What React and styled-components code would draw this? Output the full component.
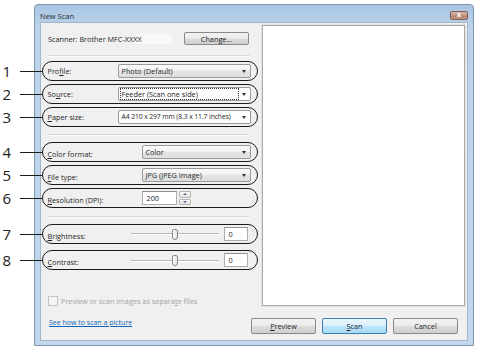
import React from 'react';
import styled, { createGlobalStyle } from 'styled-components';

const GlobalStyle = createGlobalStyle`
  body {
    margin: 0;
    background: #fff;
    font-family: "Open Sans", "Noto Sans", sans-serif;
    color: #1e1e1e;
  }
`;

const Page = styled.div`
  width: 500px;
  height: 350px;
  box-sizing: border-box;
  padding: 4px 0 0 34px;
  overflow: hidden;
`;

const Window = styled.div`
  width: 440px;
  height: 342px;
  box-sizing: border-box;
  border: 1px solid #7f95ab;
  border-radius: 4px 4px 0 0;
  background: linear-gradient(#a9c6e4, #bcd3ea 24px, #c2d7ed);
  padding: 0 5px 4px 5px;
  display: flex;
  flex-direction: column;
`;

const TitleBar = styled.div`
  height: 17px;
  flex: none;
  box-sizing: border-box;
  padding-top: 4px;
  display: flex;
  align-items: center;
  justify-content: space-between;
  font-size: 7.5px;
  color: #2a2a2a;
`;

const CloseButton = styled.div`
  width: 18px;
  height: 9px;
  box-sizing: border-box;
  border: 1px solid #7a5f52;
  border-radius: 2px;
  background: linear-gradient(#dcbcad, #c39581 50%, #b27c66 51%, #c49a86);
  color: #fff;
  font-size: 7px;
  font-weight: bold;
  line-height: 7px;
  text-align: center;
  font-family: "DejaVu Sans", sans-serif;
`;

const Client = styled.div`
  flex: 1;
  box-sizing: border-box;
  background: #f0f0f0;
  border: 1px solid #a3b6cb;
  padding: 2px 1px 5px 1px;
  display: flex;
  flex-direction: column;
  font-size: 7.3px;
`;

const TopArea = styled.div`
  display: flex;
  gap: 3px;
  height: 281px;
`;

const LeftColumn = styled.div`
  width: 216px;
  flex: none;
  padding-top: 7px;
  display: flex;
  flex-direction: column;
`;

const ScannerRow = styled.div`
  height: 13px;
  display: flex;
  align-items: center;
  justify-content: space-between;
  padding: 0 9px 0 6px;
`;

const ScannerName = styled.span`
  padding-right: 30px;
  background: linear-gradient(90deg, #f0f0f0 70%, #f8f8f8 71%);
`;

const Separator = styled.div`
  height: 1px;
  margin: ${p => p.$top}px 8px 0 6px;
  background: #d8d8d8;
  border-bottom: 1px solid #fbfbfb;
`;

const Oval = styled.div`
  position: relative;
  height: 20px;
  box-sizing: border-box;
  margin-top: ${p => p.$gap}px;
  border: 1.5px solid #1a1a1a;
  border-radius: 10px;
  display: flex;
  align-items: center;
  padding: 0 6.5px 0 4.5px;
`;

const Callout = styled.div`
  position: absolute;
  right: calc(100% + 1.5px);
  top: 50%;
  width: 39px;
  height: 0;
  display: flex;
  align-items: center;
`;

const CalloutNumber = styled.span`
  width: 17px;
  font-size: 15px;
  line-height: 15px;
  color: #222;
  font-family: "Open Sans", sans-serif;
`;

const CalloutLine = styled.span`
  flex: 1;
  height: 1px;
  background: #1a1a1a;
`;

const Label = styled.span`
  width: ${p => p.$w}px;
  flex: none;
  padding-top: ${p => (p.$low ? 4 : 0)}px;
  white-space: nowrap;
`;

const Combo = styled.div`
  flex: 1;
  height: 14px;
  box-sizing: border-box;
  border: 1px solid #9a9a9a;
  border-radius: 2px;
  background: ${p => (p.$white ? '#fdfdfd' : 'linear-gradient(#fbfbfb, #efefef 50%, #e4e4e4 51%, #dedede)')};
  display: flex;
  align-items: center;
  padding: 0 4px 0 2px;
  gap: 4px;
  overflow: hidden;
`;

const ComboText = styled.span`
  flex: 1;
  white-space: nowrap;
  line-height: 10px;
  padding-left: 1px;
  font-size: ${p => (p.$tight ? '6.8px' : 'inherit')};
  letter-spacing: ${p => (p.$tight ? '-0.1px' : 'normal')};
  outline: ${p => (p.$focus ? '1px dotted #333' : 'none')};
`;

const Arrow = styled.span`
  width: 0;
  height: 0;
  flex: none;
  border-left: 2.5px solid transparent;
  border-right: 2.5px solid transparent;
  border-top: 3px solid #333;
`;

const SpinBox = styled.div`
  display: flex;
  align-items: center;
  gap: 2px;
`;

const Field = styled.div`
  width: ${p => p.$w}px;
  height: 14px;
  box-sizing: border-box;
  border: 1px solid #abadb3;
  border-top-color: #8e8f8f;
  background: #fff;
  padding-left: 4px;
  line-height: 12px;
`;

const Spinner = styled.div`
  width: 12px;
  height: 14px;
  display: flex;
  flex-direction: column;
  gap: 1px;
`;

const SpinPart = styled.div`
  flex: 1;
  border: 1px solid #b5b5b5;
  border-radius: 1px;
  background: linear-gradient(#f8f8f8, #e3e3e3);
  display: flex;
  align-items: center;
  justify-content: center;

  &::after {
    content: '';
    border-left: 2px solid transparent;
    border-right: 2px solid transparent;
    ${p => (p.$up ? 'border-bottom: 2px solid #4a6a8a;' : 'border-top: 2px solid #4a6a8a;')}
  }
`;

const Track = styled.div`
  width: 88px;
  height: 12px;
  flex: none;
  display: flex;
  align-items: center;
  justify-content: center;
  margin-right: 5px;
  background: linear-gradient(#f0f0f0 5.5px, #b7b7b7 5.5px, #b7b7b7 6.5px, #ffffff 6.5px, #ffffff 7.5px, #f0f0f0 7.5px);
`;

const Thumb = styled.div`
  width: 6px;
  height: 11px;
  box-sizing: border-box;
  border: 1px solid #8a8a8a;
  border-radius: 2px 2px 3px 3px;
  background: linear-gradient(90deg, #fdfdfd, #e2e2e2);
`;

const CheckRow = styled.div`
  margin-top: 26px;
  padding-left: 6px;
  display: flex;
  align-items: center;
  gap: 3px;
  color: #a3a3a3;
`;

const CheckBox = styled.span`
  width: 8px;
  height: 8px;
  border: 1px solid #c4c4c4;
  background: #f4f4f4;
`;

const Preview = styled.div`
  flex: 1;
  background: #fff;
  border: 1px solid #a9a9a9;
  box-shadow: 0 0 0 1px #e2e2e2;
  margin: 0 1px 0 1px;
`;

const BottomBar = styled.div`
  margin-top: 12px;
  height: 16px;
  display: flex;
  align-items: center;
  justify-content: space-between;
  padding: 0 8px 0 7px;
`;

const HelpLink = styled.a`
  color: #0c65b8;
  text-decoration: underline;
  align-self: flex-start;
  line-height: 9px;
  font-size: 7px;
`;

const Buttons = styled.div`
  display: flex;
  gap: 6px;
`;

const Button = styled.div`
  width: 65px;
  height: ${p => (p.$small ? 13 : 16)}px;
  box-sizing: border-box;
  border: 1px solid ${p => (p.$focus ? '#3c7fb1' : '#8a8a8a')};
  border-radius: 2px;
  background: ${p => (p.$focus
    ? 'linear-gradient(#eaf6fd, #d9f0fc 50%, #bee6fd 51%, #a7d9f5)'
    : 'linear-gradient(#f2f2f2, #ebebeb 50%, #dddddd 51%, #cfcfcf)')};
  display: flex;
  align-items: center;
  justify-content: center;
  color: #222;
`;

const rows = [
  { n: 1, label: 'Profile:', key: 'f', w: 70, gap: 4, value: 'Photo (Default)' },
  { n: 2, label: 'Source:', key: 'u', w: 70, gap: 3, value: 'Feeder (Scan one side)', focus: true, white: true },
  { n: 3, label: 'Paper size:', key: 'P', w: 70, gap: 3, value: 'A4 210 x 297 mm (8.3 x 11.7 inches)', white: true, tight: true },
];

const rows2 = [
  { n: 4, label: 'Color format:', key: 'C', w: 94, gap: 6, value: 'Color' },
  { n: 5, label: 'File type:', key: 'F', w: 94, gap: 3, value: 'JPG (JPEG Image)' },
];

const Accel = ({ text, k }) => {
  const i = text.indexOf(k);
  if (i < 0) return text;
  return (
    <>
      {text.slice(0, i)}
      <u>{text[i]}</u>
      {text.slice(i + 1)}
    </>
  );
};

const Mark = ({ n }) => (
  <Callout>
    <CalloutNumber>{n}</CalloutNumber>
    <CalloutLine />
  </Callout>
);

const ComboRow = ({ row, low }) => (
  <Oval $gap={row.gap}>
    <Mark n={row.n} />
    <Label $w={row.w} $low={low}>
      <Accel text={row.label} k={row.key} />
    </Label>
    <Combo $white={row.white}>
      <ComboText $focus={row.focus} $tight={row.tight}>{row.value}</ComboText>
      <Arrow />
    </Combo>
  </Oval>
);

const SliderRow = ({ n, label, gap }) => (
  <Oval $gap={gap}>
    <Mark n={n} />
    <Label $w={83} $low>
      <Accel text={label} k={label[0]} />
    </Label>
    <Track>
      <Thumb />
    </Track>
    <Field $w={24}>0</Field>
  </Oval>
);

const App = () => {
  return (
    <Page>
      <GlobalStyle />
      <Window>
        <TitleBar>
          <span>New Scan</span>
          <CloseButton>x</CloseButton>
        </TitleBar>
        <Client>
          <TopArea>
            <LeftColumn>
              <ScannerRow>
                <ScannerName>Scanner: Brother MFC-XXXX</ScannerName>
                <Button $small>Chan<u>g</u>e...</Button>
              </ScannerRow>
              <Separator $top={10} />
              {rows.map(row => <ComboRow key={row.n} row={row} />)}
              <Separator $top={7} />
              {rows2.map(row => <ComboRow key={row.n} row={row} low />)}
              <Oval $gap={3}>
                <Mark n={6} />
                <Label $w={94} $low>
                  <u>R</u>esolution (DPI):
                </Label>
                <SpinBox>
                  <Field $w={35}>200</Field>
                  <Spinner>
                    <SpinPart $up />
                    <SpinPart />
                  </Spinner>
                </SpinBox>
              </Oval>
              <Separator $top={8} />
              <SliderRow n={7} label="Brightness:" gap={6} />
              <SliderRow n={8} label="Contrast:" gap={6} />
              <CheckRow>
                <CheckBox />
                <span>Preview or scan images as separa<u>t</u>e files</span>
              </CheckRow>
            </LeftColumn>
            <Preview />
          </TopArea>
          <BottomBar>
            <HelpLink>See how to scan a picture</HelpLink>
            <Buttons>
              <Button><u>P</u>review</Button>
              <Button $focus><u>S</u>can</Button>
              <Button>Cancel</Button>
            </Buttons>
          </BottomBar>
        </Client>
      </Window>
    </Page>
  );
};

export default App;
